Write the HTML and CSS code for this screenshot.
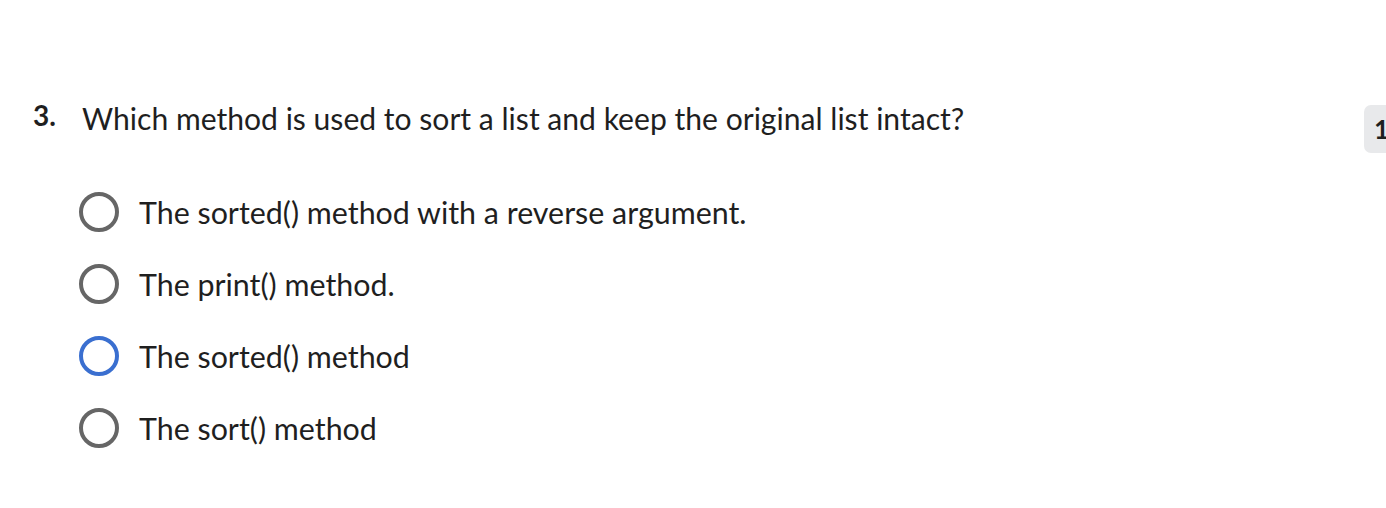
FILE: index.html
```html
<!DOCTYPE html>
<html>
<head>
<meta charset="utf-8">
<link rel="stylesheet" href="styles.css">
</head>
<body>
<div class="page">
  <div class="head">
    <div class="num">3.</div>
    <div class="qtext">Which method is used to sort a list and keep the original list intact?</div>
    <div class="badge">1</div>
  </div>
  <ul class="options">
    <li class="opt"><span class="radio"></span><span class="label">The sorted() method with a reverse argument.</span></li>
    <li class="opt"><span class="radio"></span><span class="label">The print() method.</span></li>
    <li class="opt"><span class="radio focus"></span><span class="label">The sorted() method</span></li>
    <li class="opt"><span class="radio"></span><span class="label">The sort() method</span></li>
  </ul>
</div>
</body>
</html>
```
FILE: styles.css
```css
html, body {
  margin: 0;
  padding: 0;
  overflow: hidden;
  background: #fff;
}
body {
  font-family: "Lato", "Noto Sans", sans-serif;
  color: #1f1f1f;
}
.page {
  padding: 100px 0 0 33px;
}
.head {
  display: flex;
  align-items: flex-start;
}
.num {
  width: 49px;
  font-size: 28px;
  font-weight: 700;
  line-height: 30px;
  flex: none;
  margin-top: 0;
}
.qtext {
  font-size: 30.1px;
  line-height: 36px;
  flex: 1;
}
.badge {
  flex: none;
  width: 40px;
  height: 48px;
  margin-right: -18px;
  background: #e8e9eb;
  border-radius: 7px;
  font-size: 26px;
  font-weight: 700;
  line-height: 48px;
  padding-left: 10px;
  box-sizing: border-box;
  margin-top: 5px;
}
.options {
  list-style: none;
  margin: 39px 0 0 46px;
  padding: 0;
  display: flex;
  flex-direction: column;
  gap: 32px;
}
.opt {
  display: flex;
  align-items: center;
  gap: 20px;
  height: 40px;
}
.radio {
  width: 40px;
  height: 40px;
  box-sizing: border-box;
  border: 4px solid #666;
  border-radius: 50%;
  flex: none;
}
.radio.focus {
  border-color: #3a6fd0;
}
.label {
  font-size: 30.4px;
  line-height: 40px;
}
```
